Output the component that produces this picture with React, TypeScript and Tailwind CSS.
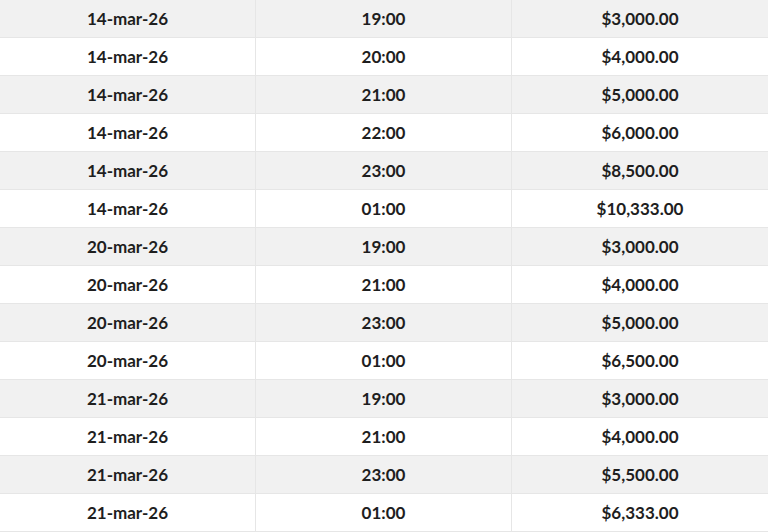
const rows: [string, string, string][] = [
  ["14-mar-26", "19:00", "$3,000.00"],
  ["14-mar-26", "20:00", "$4,000.00"],
  ["14-mar-26", "21:00", "$5,000.00"],
  ["14-mar-26", "22:00", "$6,000.00"],
  ["14-mar-26", "23:00", "$8,500.00"],
  ["14-mar-26", "01:00", "$10,333.00"],
  ["20-mar-26", "19:00", "$3,000.00"],
  ["20-mar-26", "21:00", "$4,000.00"],
  ["20-mar-26", "23:00", "$5,000.00"],
  ["20-mar-26", "01:00", "$6,500.00"],
  ["21-mar-26", "19:00", "$3,000.00"],
  ["21-mar-26", "21:00", "$4,000.00"],
  ["21-mar-26", "23:00", "$5,500.00"],
  ["21-mar-26", "01:00", "$6,333.00"],
];

export default function App() {
  return (
    <div
      className="w-[768px] h-[532px] overflow-hidden bg-white text-[#1e1e1e]"
      style={{ fontFamily: "Lato, 'Open Sans', sans-serif" }}
    >
      {rows.map((r, i) => (
        <div
          key={i}
          className={`grid grid-cols-[256px_256px_256px] h-[38px] border-b border-[#e6e6e6] ${
            i % 2 === 0 ? "bg-[#f1f1f1]" : "bg-white"
          }`}
        >
          <div className="flex items-center justify-center border-r border-[#e6e6e6] text-[17px] font-bold">
            {r[0]}
          </div>
          <div className="flex items-center justify-center border-r border-[#e6e6e6] text-[17px] font-bold">
            {r[1]}
          </div>
          <div className="flex items-center justify-center text-[17px] font-bold">{r[2]}</div>
        </div>
      ))}
    </div>
  );
}
